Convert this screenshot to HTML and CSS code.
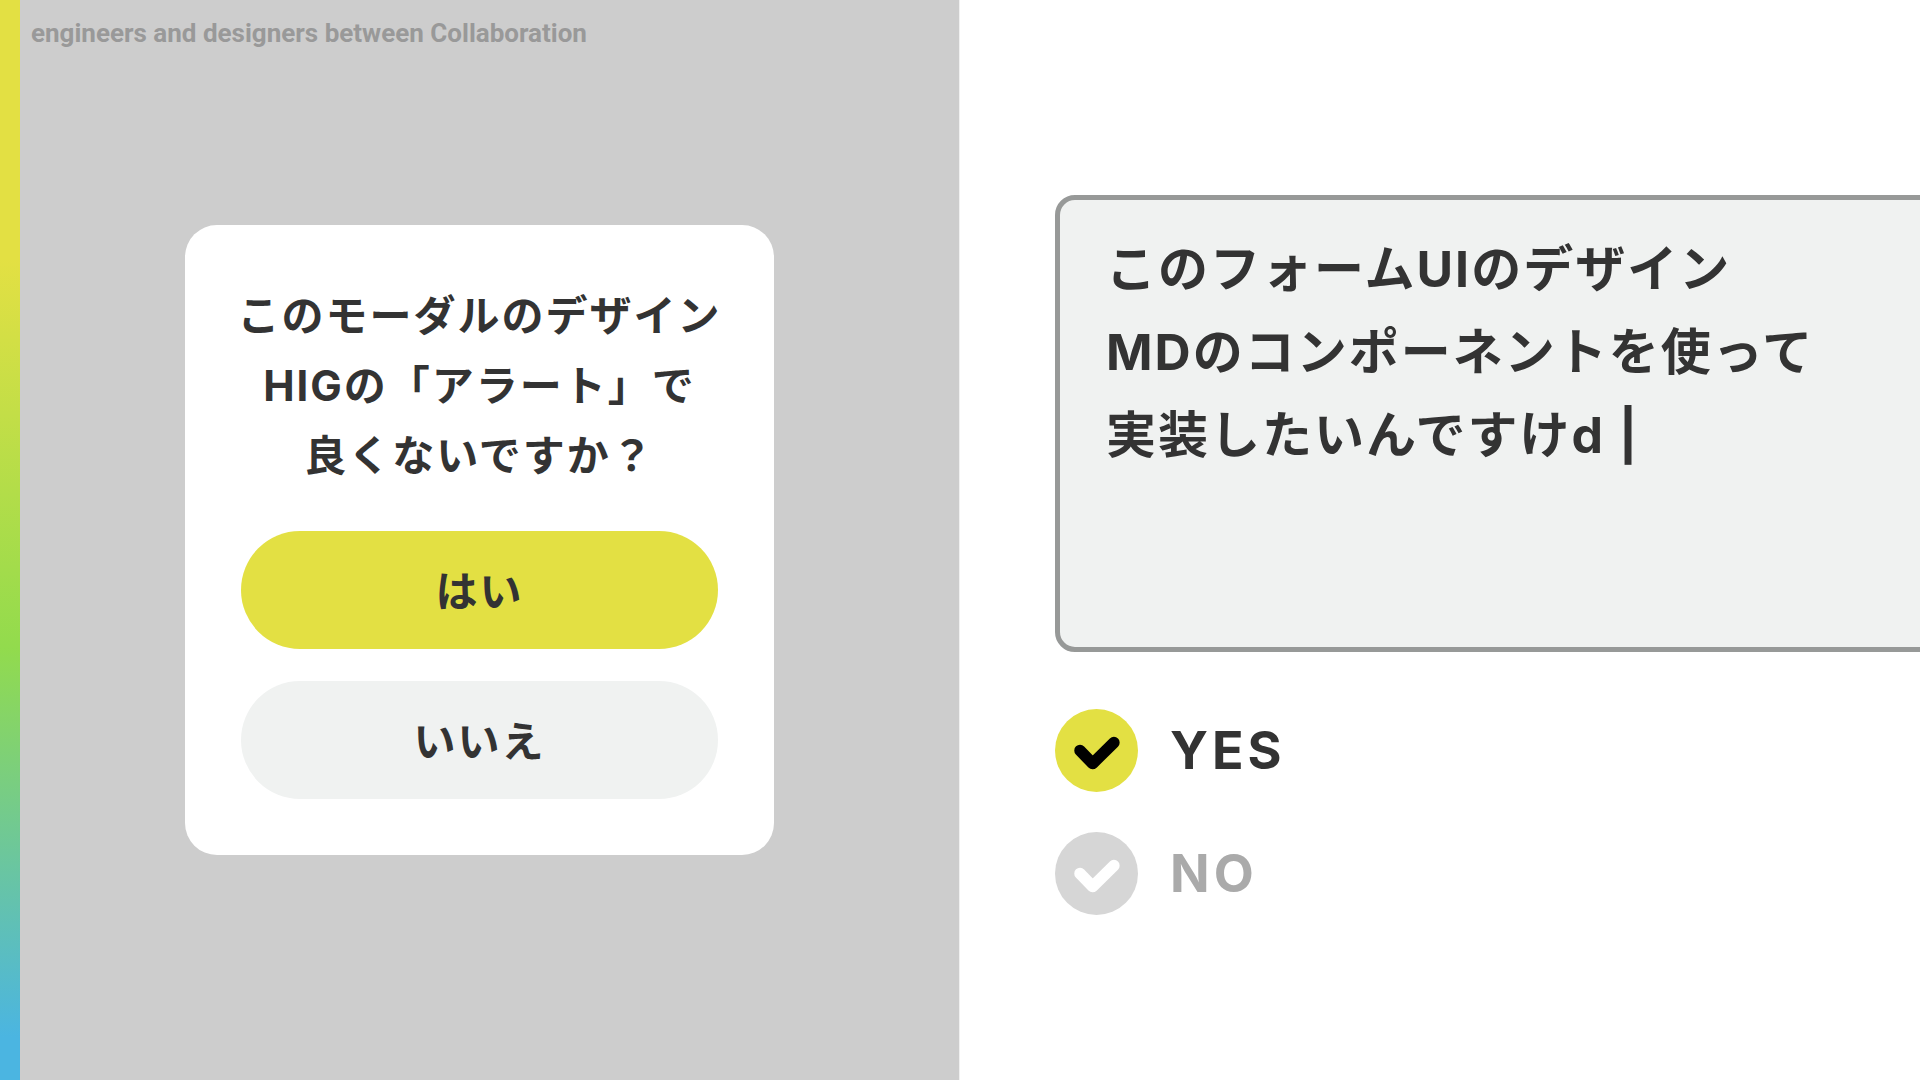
FILE: index.html
```html
<!DOCTYPE html>
<html lang="ja">
  <head>
    <meta charset="utf-8">
    <title>engineers and designers between Collaboration</title>
    <link rel="stylesheet" href="styles.css">
  </head>
  <body>
    <section class="designer">
      <h1 class="tagline">engineers and designers between Collaboration</h1>
      <div class="modal" role="dialog" aria-labelledby="modal-text">
        <p class="modal-text" id="modal-text">このモーダルのデザイン<br>HIGの「アラート」で<br>良くないですか？</p>
        <div class="modal-actions">
          <button class="btn btn-primary" type="button">はい</button>
          <button class="btn" type="button">いいえ</button>
        </div>
      </div>
    </section>

    <form class="engineer">
      <textarea class="message" aria-label="メッセージ" spellcheck="false">このフォームUIのデザイン
MDのコンポーネントを使って
実装したいんですけd |</textarea>
      <div class="answers">
        <label class="answer">
          <span class="mark">
            <input type="radio" name="answer" value="yes" checked>
            <svg viewBox="0 0 83 83" aria-hidden="true"><circle cx="41.5" cy="41.5" r="41.5"/><path d="M25 41.5 37.6 54.6 58.9 33.6"/></svg>
          </span>
          <span class="answer-text">YES</span>
        </label>
        <label class="answer">
          <span class="mark">
            <input type="radio" name="answer" value="no">
            <svg viewBox="0 0 83 83" aria-hidden="true"><circle cx="41.5" cy="41.5" r="41.5"/><path d="M25 41.5 37.6 54.6 58.9 33.6"/></svg>
          </span>
          <span class="answer-text">NO</span>
        </label>
      </div>
    </form>
  </body>
</html>
```
FILE: styles.css
```css
* { box-sizing: border-box; }

body {
  display: grid;
  grid-template-columns: 1fr 1fr;
  min-height: 100vh;
  margin: 0;
  background: #fff;
  color: #333;
  font-family: Inter, "Noto Sans CJK JP", sans-serif;
  font-weight: 700;
}

/* left half: modal on grey, rainbow strip on the edge */
.designer {
  display: grid;
  grid-template-rows: 1fr auto 1fr;
  justify-items: center;
  border-right: 1px solid #f0f0f0;
  background:
    linear-gradient(#e3e043 24%, #92db4d 60%, #4bb5e1 96%) left / 20px 100% no-repeat,
    #cdcdcd;
}

.tagline {
  justify-self: start;
  margin: 0;
  padding: 16px 0 0 31px;
  color: #999;
  font-family: Roboto, sans-serif;
  font-size: 26px;
  line-height: 34px;
}

.modal {
  width: 589px;
  max-width: 90%;
  padding: 56px;
  border-radius: 32px;
  background: #fff;
}

.modal-text {
  margin: 0 -8px 40px;
  font-size: 42px;
  line-height: 70px;
  letter-spacing: 2px;
  text-align: center;
}

.modal-actions {
  display: flex;
  flex-direction: column;
  gap: 32px;
}

.btn {
  height: 118px;
  padding: 0 0 4px;
  border: 0;
  border-radius: 59px;
  background: #f0f2f1;
  color: inherit;
  font: inherit;
  font-size: 42px;
  letter-spacing: 2px;
}

.btn-primary { background: #e3e043; }

/* right half: the form runs off the edge of the window */
.engineer {
  overflow: hidden;
  padding: 195px 0 0 95px;
}

.message {
  display: block;
  width: calc(100% + 40px);
  height: 457px;
  padding: 28px 46px;
  overflow: hidden;
  resize: none;
  border: 5px solid #979998;
  border-radius: 20px;
  outline: 0;
  background: #f0f2f1;
  color: inherit;
  font: inherit;
  font-size: 50px;
  line-height: 83px;
  letter-spacing: 2px;
}

.answers {
  display: flex;
  flex-direction: column;
  align-items: flex-start;
  gap: 40px;
  margin-top: 57px;
}

.answer {
  display: flex;
  align-items: center;
  gap: 32px;
}

.mark {
  display: grid;
  width: 83px;
  height: 83px;
}

.mark input,
.mark svg {
  grid-area: 1 / 1;
  width: 100%;
  height: 100%;
  margin: 0;
}

.mark input { opacity: 0; }

.mark circle { fill: #d6d6d6; }

.mark path {
  fill: none;
  stroke: #fff;
  stroke-width: 11.5;
  stroke-linecap: round;
  stroke-linejoin: round;
}

.mark input:checked + svg circle { fill: #e3e043; }
.mark input:checked + svg path { stroke: #000; }

.answer-text {
  color: #aaa;
  font-size: 52px;
  line-height: 83px;
  letter-spacing: 4px;
}

.mark:has(input:checked) + .answer-text { color: #333; }
```
